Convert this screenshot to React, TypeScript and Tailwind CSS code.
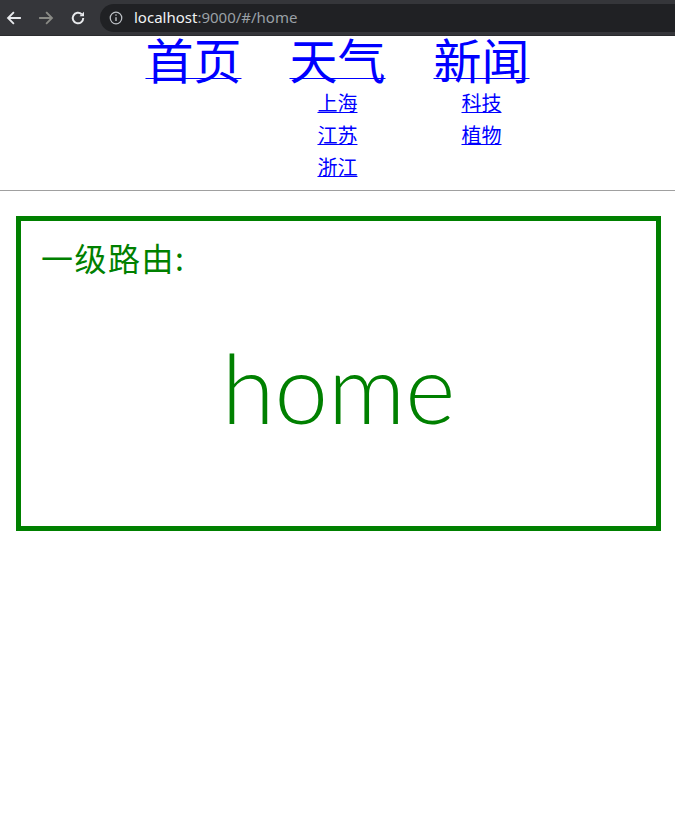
import React from "react"

const cjk = { fontFamily: '"Noto Sans CJK SC", "Noto Sans", sans-serif' }

type NavItem = { label: string; children: string[] }

const nav: NavItem[] = [
  { label: "首页", children: [] },
  { label: "天气", children: ["上海", "江苏", "浙江"] },
  { label: "新闻", children: ["科技", "植物"] },
]

function BrowserBar() {
  return (
    <div className="h-[36px] bg-[#35363a] flex items-center border-b border-[#2a2b2e]">
      <div className="flex items-center w-[100px] shrink-0">
        <svg className="ml-[5px]" width="18" height="18" viewBox="0 0 24 24" fill="none" stroke="#e8eaed" strokeWidth="2.4" strokeLinecap="square">
          <path d="M20 12H5M11 5l-7 7 7 7" />
        </svg>
        <svg className="ml-[14px]" width="18" height="18" viewBox="0 0 24 24" fill="none" stroke="#8a8b86" strokeWidth="2.4" strokeLinecap="square">
          <path d="M4 12h15M13 5l7 7-7 7" />
        </svg>
        <svg className="ml-[14px]" width="18" height="18" viewBox="0 0 24 24" fill="none" stroke="#e8eaed" strokeWidth="2.6">
          <path d="M19 12a7 7 0 1 1-2.1-5" />
          <path d="M20 3.5v6h-6z" fill="#e8eaed" stroke="none" />
        </svg>
      </div>
      <div className="flex-1 h-[28px] bg-[#202124] rounded-l-full flex items-center pl-[9px]">
        <svg width="14" height="14" viewBox="0 0 16 16" fill="none" stroke="#bdc1c6" strokeWidth="1.4">
          <circle cx="8" cy="8" r="6.6" />
          <path d="M8 7v4.5" strokeWidth="1.6" />
          <circle cx="8" cy="4.7" r="0.9" fill="#bdc1c6" stroke="none" />
        </svg>
        <span className="ml-[11px] text-[15px] leading-none" style={{ fontFamily: '"Noto Sans", "Open Sans", sans-serif' }}>
          <span className="text-[#f1f3f4]">localhost</span>
          <span className="text-[#9aa0a6]">:9000/#/home</span>
        </span>
      </div>
    </div>
  )
}

export default function App() {
  return (
    <div className="w-[675px] h-[837px] bg-white overflow-hidden" style={cjk}>
      <BrowserBar />
      <ul className="flex justify-center gap-[48px] text-center">
        {nav.map((item) => (
          <li key={item.label} className="flex flex-col items-center">
            <a
              href={"#/" + item.label}
              className="block text-[48px] leading-[45px] text-[#0000ff] underline decoration-[#0000ff] decoration-1 underline-offset-[-1px]"
            >
              {item.label}
            </a>
            <div className="mt-[6px] flex flex-col items-center">
              {item.children.map((c) => (
                <a key={c} href={"#/" + c} className="block text-[20px] leading-[32px] text-[#0000ff] underline decoration-[#0000ff] decoration-1">
                  {c}
                </a>
              ))}
            </div>
          </li>
        ))}
      </ul>
      <hr className="mt-[7px] border-0 border-t border-[#a0a0a0]" />
      <div className="mt-[25px] ml-[16px] w-[645px] h-[315px] border-[5px] border-[#008000] box-border pt-[12px] px-[20px] text-[#008000]">
        <h2 className="text-[32px] leading-[48px] tracking-[1.5px]">一级路由:</h2>
        <div className="mt-[46px] text-center text-[96px] leading-[120px] font-light" style={{ fontFamily: 'Lato, "Noto Sans", sans-serif' }}>
          home
        </div>
      </div>
    </div>
  )
}
